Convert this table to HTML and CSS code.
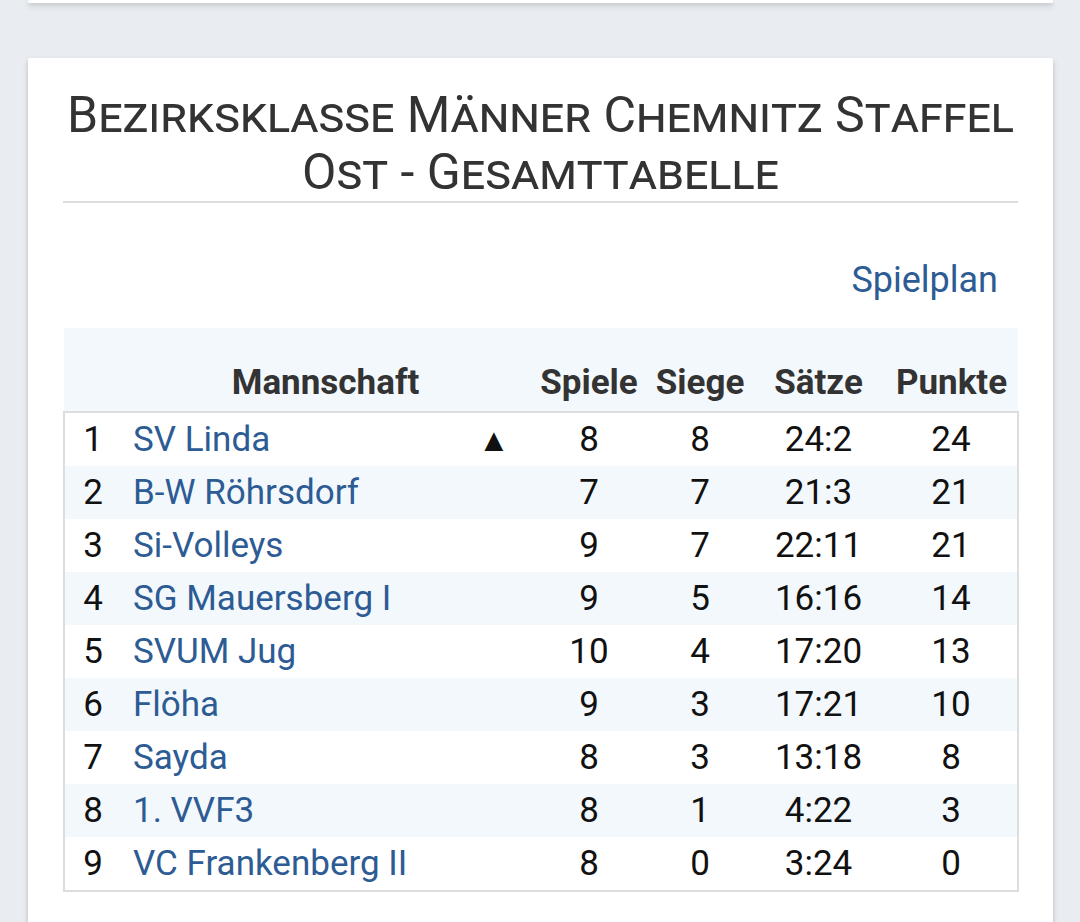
FILE: index.html
```html
<!DOCTYPE html>
<html lang="de">
<head>
<meta charset="utf-8">
<link rel="stylesheet" href="styles.css">
</head>
<body>
<div class="page">
  <div class="card card-top"></div>
  <div class="card card-main">
    <h1 class="title">Bezirksklasse Männer Chemnitz Staffel Ost - Gesamttabelle</h1>
    <div class="links"><a class="link" href="#">Spielplan</a></div>
    <table class="standings">
      <colgroup>
        <col class="c-rank">
        <col class="c-team">
        <col class="c-trend">
        <col class="c-spiele">
        <col class="c-siege">
        <col class="c-saetze">
        <col class="c-punkte">
      </colgroup>
      <thead>
        <tr>
          <th></th>
          <th colspan="2">Mannschaft</th>
          <th>Spiele</th>
          <th>Siege</th>
          <th>Sätze</th>
          <th>Punkte</th>
        </tr>
      </thead>
      <tbody>
        <tr><td class="rank">1</td><td class="team"><a href="#">SV Linda</a></td><td class="trend">▲</td><td>8</td><td>8</td><td>24:2</td><td>24</td></tr>
        <tr><td class="rank">2</td><td class="team"><a href="#">B-W Röhrsdorf</a></td><td class="trend"></td><td>7</td><td>7</td><td>21:3</td><td>21</td></tr>
        <tr><td class="rank">3</td><td class="team"><a href="#">Si-Volleys</a></td><td class="trend"></td><td>9</td><td>7</td><td>22:11</td><td>21</td></tr>
        <tr><td class="rank">4</td><td class="team"><a href="#">SG Mauersberg I</a></td><td class="trend"></td><td>9</td><td>5</td><td>16:16</td><td>14</td></tr>
        <tr><td class="rank">5</td><td class="team"><a href="#">SVUM Jug</a></td><td class="trend"></td><td>10</td><td>4</td><td>17:20</td><td>13</td></tr>
        <tr><td class="rank">6</td><td class="team"><a href="#">Flöha</a></td><td class="trend"></td><td>9</td><td>3</td><td>17:21</td><td>10</td></tr>
        <tr><td class="rank">7</td><td class="team"><a href="#">Sayda</a></td><td class="trend"></td><td>8</td><td>3</td><td>13:18</td><td>8</td></tr>
        <tr><td class="rank">8</td><td class="team"><a href="#">1. VVF3</a></td><td class="trend"></td><td>8</td><td>1</td><td>4:22</td><td>3</td></tr>
        <tr><td class="rank">9</td><td class="team"><a href="#">VC Frankenberg II</a></td><td class="trend"></td><td>8</td><td>0</td><td>3:24</td><td>0</td></tr>
      </tbody>
    </table>
  </div>
</div>
</body>
</html>
```

FILE: styles.css
```css
html, body {
  margin: 0;
  padding: 0;
}
body {
  background: #e9ecf0;
  font-family: Roboto, "Liberation Sans", sans-serif;
  color: #111;
  height: 922px;
  overflow: hidden;
}
.page {
  padding: 0 27px 0 28px;
  display: flex;
  flex-direction: column;
  gap: 55px;
}
.card {
  background: #fff;
  border-radius: 2px;
  box-shadow: 0 3px 6px rgba(0,0,0,0.16), 0 2px 3px rgba(0,0,0,0.08);
}
.card-top {
  height: 3px;
}
.card-main {
  padding: 29px 35px 40px 35px;
}
.title {
  margin: 0;
  font-weight: 400;
  font-variant: small-caps;
  font-size: 50px;
  line-height: 57px;
  text-align: center;
  color: #333;
  padding-bottom: 0;
  border-bottom: 2px solid #ddd;
}
.links {
  display: flex;
  justify-content: flex-end;
  padding: 57px 20px 28px 0;
}
.link {
  color: #2d5b94;
  text-decoration: none;
  font-size: 36px;
  line-height: 40px;
}
.standings {
  width: 954px;
  border-collapse: collapse;
  font-size: 35px;
  table-layout: fixed;
}
.c-rank { width: 57px; }
.c-team { width: 343px; }
.c-trend { width: 66px; }
.c-spiele { width: 118px; }
.c-siege { width: 104px; }
.c-saetze { width: 133px; }
.c-punkte { width: 133px; }
.standings thead tr {
  background: #f3f8fc;
}
.standings th {
  height: 84px;
  padding: 0 0 8px;
  vertical-align: bottom;
  font-weight: 700;
  color: #333;
  text-align: center;
  white-space: nowrap;
  box-sizing: border-box;
}
.standings tbody {
  border: 2px solid #ddd;
}
.standings td {
  height: 53px;
  padding: 0;
  text-align: center;
  vertical-align: middle;
}
.standings tbody tr:nth-child(even) {
  background: #f3f8fc;
}
.standings td.rank {
  text-align: center;
}
.standings td.team {
  text-align: left;
  padding-left: 12px;
  white-space: nowrap;
}
.standings td.team a {
  color: #2d5b94;
  text-decoration: none;
}
.standings td.trend {
  font-size: 32px;
  text-align: left;
  padding-left: 14px;
}
```
